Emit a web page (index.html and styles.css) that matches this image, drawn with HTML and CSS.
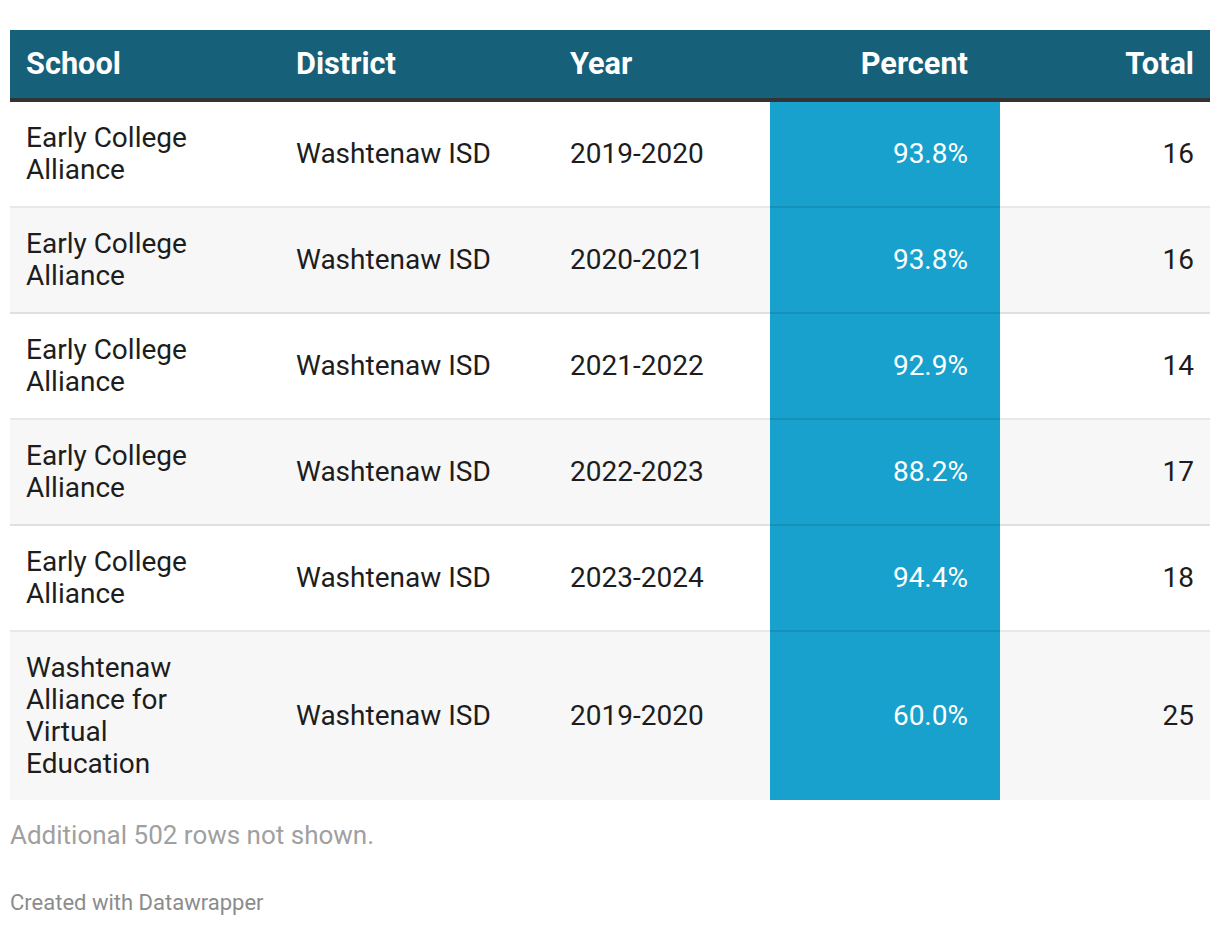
FILE: index.html
```html
<!DOCTYPE html>
<html>
<head>
<meta charset="utf-8">
<link rel="stylesheet" href="styles.css">
</head>
<body>
<div class="chart">
  <table class="tbl">
    <colgroup>
      <col class="c-school"><col class="c-district"><col class="c-year"><col class="c-pct"><col class="c-total">
    </colgroup>
    <thead>
      <tr>
        <th class="left">School</th>
        <th class="left">District</th>
        <th class="left">Year</th>
        <th class="right pct-h">Percent</th>
        <th class="right">Total</th>
      </tr>
    </thead>
    <tbody>
      <tr><td>Early College<br>Alliance</td><td>Washtenaw ISD</td><td>2019-2020</td><td class="pct">93.8%</td><td class="num">16</td></tr>
      <tr><td>Early College<br>Alliance</td><td>Washtenaw ISD</td><td>2020-2021</td><td class="pct">93.8%</td><td class="num">16</td></tr>
      <tr><td>Early College<br>Alliance</td><td>Washtenaw ISD</td><td>2021-2022</td><td class="pct">92.9%</td><td class="num">14</td></tr>
      <tr><td>Early College<br>Alliance</td><td>Washtenaw ISD</td><td>2022-2023</td><td class="pct">88.2%</td><td class="num">17</td></tr>
      <tr><td>Early College<br>Alliance</td><td>Washtenaw ISD</td><td>2023-2024</td><td class="pct">94.4%</td><td class="num">18</td></tr>
      <tr class="last"><td>Washtenaw<br>Alliance for<br>Virtual<br>Education</td><td>Washtenaw ISD</td><td>2019-2020</td><td class="pct">60.0%</td><td class="num">25</td></tr>
    </tbody>
  </table>
  <p class="note">Additional 502 rows not shown.</p>
  <p class="credit">Created with Datawrapper</p>
</div>
</body>
</html>
```

FILE: styles.css
```css
html, body {
  margin: 0;
  padding: 0;
  background: #ffffff;
}
body {
  font-family: Roboto, "Liberation Sans", Arial, sans-serif;
  color: #1d1d1d;
}
.chart {
  padding: 30px 10px 0 10px;
}
.tbl {
  width: 1200px;
  border-collapse: separate;
  border-spacing: 0;
  table-layout: fixed;
}
.c-school { width: 270px; }
.c-district { width: 274px; }
.c-year { width: 216px; }
.c-pct { width: 230px; }
.c-total { width: 210px; }

.tbl th {
  background: #17607a;
  color: #ffffff;
  font-size: 30.7px;
  font-weight: 700;
  line-height: 32px;
  padding: 18px 16px;
  height: 32px;
  border-bottom: 4px solid #333333;
}
.tbl th.left { text-align: left; }
.tbl th.right { text-align: right; }
.tbl th.pct-h { padding-right: 32px; }

.tbl td {
  font-size: 28px;
  line-height: 32px;
  padding: 20px 16px;
  vertical-align: middle;
  text-align: left;
  border-bottom: 2px solid rgba(0, 0, 0, 0.09);
}
.tbl tbody tr:nth-child(even) td {
  background: #f7f7f7;
}
.tbl tbody tr.last td {
  border-bottom: none;
  background: #f7f7f7;
}
.tbl td.pct {
  background: #18a1cd !important;
  color: #ffffff;
  text-align: right;
  padding-right: 32px;
}
.tbl td.num {
  text-align: right;
}
.note {
  margin: 20px 0 0 0;
  font-size: 26px;
  line-height: 30px;
  color: #a0a0a0;
}
.credit {
  margin: 40px 0 0 0;
  font-size: 22px;
  line-height: 26px;
  color: #8c8c8c;
}
```
